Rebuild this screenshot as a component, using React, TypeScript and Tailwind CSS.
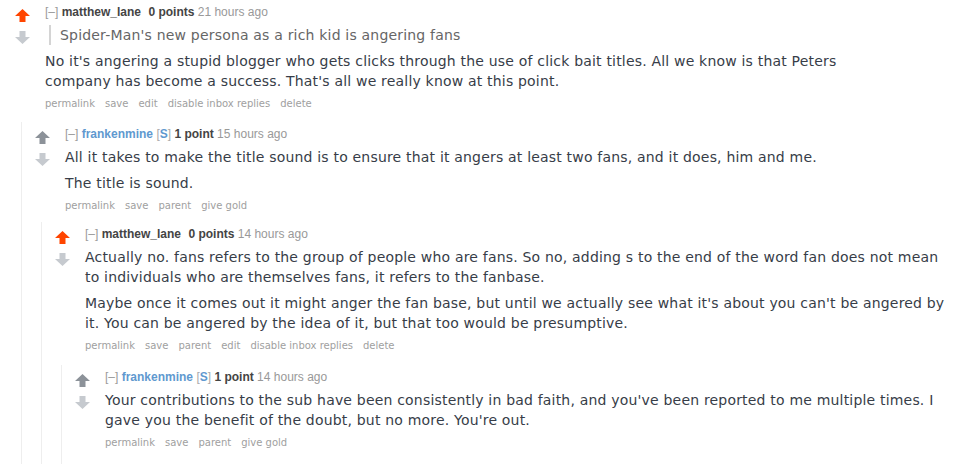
type Vote = "up" | "none";

type CommentData = {
  author: string;
  submitter?: boolean;
  points: string;
  time: string;
  vote: Vote;
  quote?: string;
  // each paragraph is kept as the lines it wraps into
  paras: string[][];
  actions: string[];
  child?: CommentData;
};

const thread: CommentData = {
  author: "matthew_lane",
  points: "0 points",
  time: "21 hours ago",
  vote: "up",
  quote: "Spider-Man's new persona as a rich kid is angering fans",
  paras: [
    [
      "No it's angering a stupid blogger who gets clicks through the use of click bait titles. All we know is that Peters",
      "company has become a success. That's all we really know at this point.",
    ],
  ],
  actions: ["permalink", "save", "edit", "disable inbox replies", "delete"],
  child: {
    author: "frankenmine",
    submitter: true,
    points: "1 point",
    time: "15 hours ago",
    vote: "none",
    paras: [
      [
        "All it takes to make the title sound is to ensure that it angers at least two fans, and it does, him and me.",
      ],
      ["The title is sound."],
    ],
    actions: ["permalink", "save", "parent", "give gold"],
    child: {
      author: "matthew_lane",
      points: "0 points",
      time: "14 hours ago",
      vote: "up",
      paras: [
        [
          "Actually no. fans refers to the group of people who are fans. So no, adding s to the end of the word fan does not mean",
          "to individuals who are themselves fans, it refers to the fanbase.",
        ],
        [
          "Maybe once it comes out it might anger the fan base, but until we actually see what it's about you can't be angered by",
          "it. You can be angered by the idea of it, but that too would be presumptive.",
        ],
      ],
      actions: ["permalink", "save", "parent", "edit", "disable inbox replies", "delete"],
      child: {
        author: "frankenmine",
        submitter: true,
        points: "1 point",
        time: "14 hours ago",
        vote: "none",
        paras: [
          [
            "Your contributions to the sub have been consistently in bad faith, and you've been reported to me multiple times. I",
            "gave you the benefit of the doubt, but no more. You're out.",
          ],
        ],
        actions: ["permalink", "save", "parent", "give gold"],
      },
    },
  },
};

// space above each nested reply, by depth of the parent
const childGap = ["mt-[11px]", "mt-[9px]", "mt-[12px]", "mt-[11px]"];

const UpArrow = ({ color }: { color: string }) => (
  <svg width="15" height="13" viewBox="0 0 15 13">
    <path d="M7.5 0 L15 7 H10.5 V13 H4.5 V7 H0 Z" fill={color} />
  </svg>
);

const DownArrow = ({ color }: { color: string }) => (
  <svg width="15" height="13" viewBox="0 0 15 13">
    <path d="M4.5 0 H10.5 V6 H15 L7.5 13 L0 6 H4.5 Z" fill={color} />
  </svg>
);

const Comment = ({ c, depth }: { c: CommentData; depth: number }) => {
  const root = depth === 0;
  return (
    <div
      className={
        root
          ? "pl-[15px] pt-[5px]"
          : `border-l border-[#eeeeee] pl-[13px] pt-[5px] ${c.child ? "" : "pb-[14px]"}`
      }
    >
      <div className="flex">
        <div className="w-[15px] shrink-0 flex flex-col pt-[4px] gap-[9px]">
          <UpArrow color={c.vote === "up" ? "#ff4500" : "#8c9299"} />
          <DownArrow color="#c6cacf" />
        </div>
        <div className="ml-[15px] min-w-0">
          <div className="font-['Liberation_Sans',Arial,sans-serif] text-[12px] leading-[14px] text-[#888] whitespace-nowrap">
            <span className="text-[#9a9a9a]">[–]</span>{" "}
            <span
              className={`font-bold ${c.submitter ? "text-[#5f99cf]" : "text-[#444] mr-[4px]"}`}
            >
              {c.author}
            </span>{" "}
            {c.submitter && (
              <>
                <span className="text-[#aaa]">
                  [<span className="font-bold text-[#5f99cf]">S</span>]
                </span>{" "}
              </>
            )}
            <span className="font-bold text-[#444]">{c.points}</span>{" "}
            <span className="text-[#999]">{c.time}</span>
          </div>
          <div className="mt-[6px] whitespace-nowrap font-['DejaVu_Sans',Verdana,sans-serif] text-[14px] leading-[20px] tracking-[0.19px] text-[#373d48]">
            {c.quote && (
              <blockquote className="ml-[4px] mb-[6px] border-l-2 border-[#d4d4d4] pl-[9px] text-[#666]">
                {c.quote}
              </blockquote>
            )}
            {c.paras.map((lines, i) => (
              <p key={i} className={i > 0 ? "mt-[6px]" : ""}>
                {lines.map((line, j) => (
                  <span key={j}>
                    {j > 0 && <br />}
                    {line}
                  </span>
                ))}
              </p>
            ))}
          </div>
          <ul className="mt-[6px] flex gap-[10px] font-['DejaVu_Sans',Verdana,sans-serif] text-[10px] leading-[14px] text-[#a0a0a0]">
            {c.actions.map((a) => (
              <li key={a}>{a}</li>
            ))}
          </ul>
        </div>
      </div>
      {c.child && (
        <div className={`ml-[6px] ${childGap[depth]}`}>
          <Comment c={c.child} depth={depth + 1} />
        </div>
      )}
    </div>
  );
};

export default function App() {
  return (
    <div className="w-[975px] h-[472px] overflow-hidden bg-white">
      <Comment c={thread} depth={0} />
    </div>
  );
}
